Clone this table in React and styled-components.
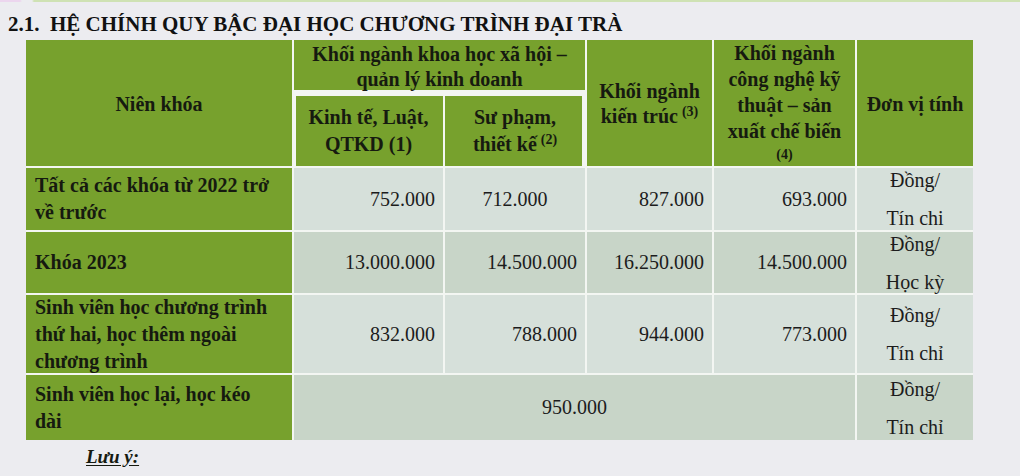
import React from "react";
import styled, { createGlobalStyle } from "styled-components";

const GlobalStyle = createGlobalStyle`
  html, body {
    margin: 0;
    padding: 0;
    background: #ececf0;
    overflow: hidden;
  }
  body {
    font-family: "Liberation Serif", "Times New Roman", serif;
    color: #161a10;
  }
`;

const Page = styled.div`
  width: 1020px;
  height: 476px;
  overflow: hidden;
  position: relative;
`;

const TopStrip = styled.div`
  height: 2px;
  background: linear-gradient(
    90deg,
    #ecd6ee 0px,
    #ecd6ee 20px,
    #ececf0 22px,
    #ececf0 32px,
    #cfe2b4 34px,
    #cfe2b4 100%
  );
`;

const Title = styled.h2`
  margin: 0;
  height: 38px;
  padding: 10px 0 0 8px;
  box-sizing: border-box;
  font-size: 21px;
  line-height: 24px;
  font-weight: bold;
  color: #111;
  white-space: pre;
`;

const Grid = styled.div`
  display: grid;
  grid-template-columns: 266px 149px 140px 125px 141px 116px;
  grid-template-rows: 50px 74px 62px 61px 78px 65px;
  gap: 2px;
  background: #f3f6f2;
  width: 947px;
  margin-left: 26px;
`;

const HeadCell = styled.div`
  grid-column: ${(p) => p.$col};
  grid-row: ${(p) => p.$row};
  background: #77a12d;
  display: flex;
  flex-direction: column;
  align-items: center;
  justify-content: center;
  text-align: center;
  font-weight: bold;
  font-size: 20px;
  line-height: ${(p) => p.$lh || 25}px;
  padding-top: ${(p) => p.$pt || 0}px;
  box-sizing: border-box;
  box-shadow: ${(p) => p.$frame || "none"};
  overflow: visible;
`;

const Sup = styled.sup`
  font-size: 14px;
  line-height: 0;
  vertical-align: 7px;
  margin-left: 4px;
`;

const Note = styled.span`
  font-size: 14px;
  line-height: 22px;
`;

const LabelCell = styled.div`
  background: #77a12d;
  display: flex;
  align-items: center;
  padding: 0 10px 0 9px;
  font-weight: bold;
  font-size: 20px;
  line-height: 27px;
`;

const ValueCell = styled.div`
  grid-column: ${(p) => p.$span || "auto"};
  background: ${(p) => (p.$dark ? "#c8d5c8" : "#d6e0da")};
  display: flex;
  align-items: center;
  justify-content: ${(p) =>
    p.$align === "center" ? "center" : "flex-end"};
  padding: 0 8px;
  font-size: 20px;
  color: #1c1c1c;
`;

const UnitCell = styled.div`
  background: ${(p) => (p.$dark ? "#c8d5c8" : "#d6e0da")};
  display: flex;
  flex-direction: column;
  align-items: center;
  justify-content: center;
  font-size: 20px;
  line-height: 38px;
  color: #1c1c1c;
  overflow: visible;
  white-space: nowrap;
`;

const Footer = styled.div`
  padding: 5px 0 0 86px;
`;

const NoteTitle = styled.div`
  font-size: 19px;
  line-height: 24px;
  font-weight: bold;
  font-style: italic;
  text-decoration: underline;
  text-underline-offset: 2px;
`;

const rows = [
  {
    label: ["Tất cả các khóa từ 2022 trở", "về trước"],
    values: [
      { v: "752.000" },
      { v: "712.000", align: "center" },
      { v: "827.000" },
      { v: "693.000" },
    ],
    unit: ["Đồng/", "Tín chi"],
  },
  {
    label: ["Khóa 2023"],
    dark: true,
    values: [
      { v: "13.000.000" },
      { v: "14.500.000" },
      { v: "16.250.000" },
      { v: "14.500.000" },
    ],
    unit: ["Đồng/", "Học kỳ"],
  },
  {
    label: ["Sinh viên học chương trình", "thứ hai, học thêm ngoài", "chương trình"],
    values: [
      { v: "832.000" },
      { v: "788.000" },
      { v: "944.000" },
      { v: "773.000" },
    ],
    unit: ["Đồng/", "Tín chỉ"],
  },
  {
    label: ["Sinh viên học lại, học kéo", "dài"],
    dark: true,
    values: [{ v: "950.000", align: "center", span: "2 / span 4" }],
    unit: ["Đồng/", "Tín chỉ"],
  },
];

export default function App() {
  return (
    <Page>
      <GlobalStyle />
      <TopStrip />
      <Title>{"2.1.  HỆ CHÍNH QUY BẬC ĐẠI HỌC CHƯƠNG TRÌNH ĐẠI TRÀ"}</Title>
      <Grid>
        <HeadCell $col="1" $row="1 / span 2" $pt={2}>
          Niên khóa
        </HeadCell>
        <HeadCell $col="2 / span 2" $row="1" $pt={3}>
          <div>Khối ngành khoa học xã hội –</div>
          <div>quản lý kinh doanh</div>
        </HeadCell>
        <HeadCell $col="4" $row="1 / span 2" $pt={2}>
          <div>Khối ngành</div>
          <div>
            kiến trúc<Sup>(3)</Sup>
          </div>
        </HeadCell>
        <HeadCell $col="5" $row="1 / span 2" $lh={26}>
          <div>Khối ngành</div>
          <div>công nghệ kỹ</div>
          <div>thuật – sản</div>
          <div>xuất chế biến</div>
          <Note>(4)</Note>
        </HeadCell>
        <HeadCell $col="6" $row="1 / span 2" $pt={2}>
          Đơn vị tính
        </HeadCell>
        <HeadCell
          $col="2"
          $row="2"
          $lh={27}
          $pt={4}
          $frame="inset 2px 4px 0 #f3f6f2"
        >
          <div>Kinh tế, Luật,</div>
          <div>QTKD (1)</div>
        </HeadCell>
        <HeadCell
          $col="3"
          $row="2"
          $lh={27}
          $pt={4}
          $frame="inset -3px 4px 0 #f3f6f2"
        >
          <div>Sư phạm,</div>
          <div>
            thiết kế<Sup>(2)</Sup>
          </div>
        </HeadCell>

        {rows.map((r, i) => (
          <React.Fragment key={i}>
            <LabelCell>
              <div>
                {r.label.map((l, j) => (
                  <div key={j}>{l}</div>
                ))}
              </div>
            </LabelCell>
            {r.values.map((c, j) => (
              <ValueCell key={j} $dark={r.dark} $align={c.align} $span={c.span}>
                {c.v}
              </ValueCell>
            ))}
            <UnitCell $dark={r.dark}>
              {r.unit.map((u, j) => (
                <div key={j}>{u}</div>
              ))}
            </UnitCell>
          </React.Fragment>
        ))}
      </Grid>
      <Footer>
        <NoteTitle>Lưu ý:</NoteTitle>
      </Footer>
    </Page>
  );
}
